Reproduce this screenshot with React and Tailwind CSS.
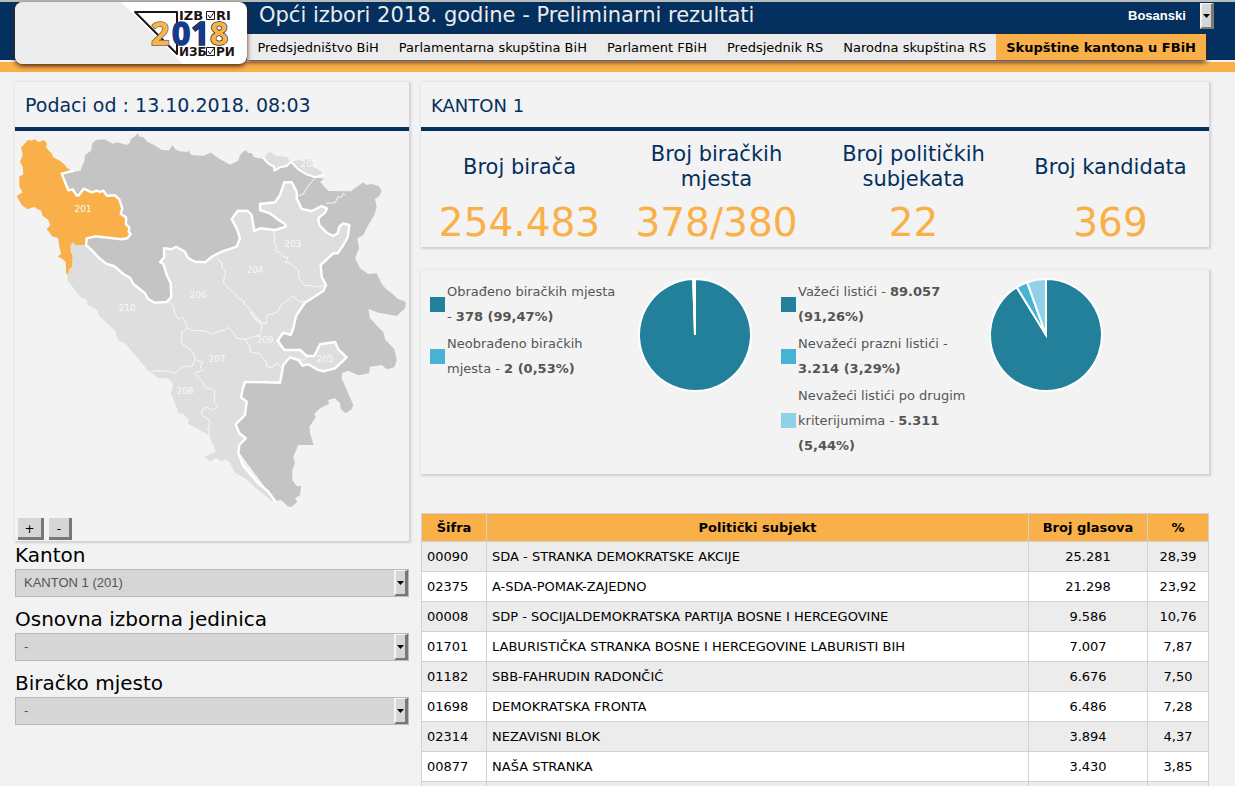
import { useState } from "react";

const NAV_ITEMS = [
  "Predsjedništvo BiH",
  "Parlamentarna skupština BiH",
  "Parlament FBiH",
  "Predsjednik RS",
  "Narodna skupština RS",
  "Skupštine kantona u FBiH",
];

const STATS = [
  { label: "Broj birača", value: "254.483" },
  { label: "Broj biračkih mjesta", value: "378/380" },
  { label: "Broj političkih subjekata", value: "22" },
  { label: "Broj kandidata", value: "369" },
];

const POLLING = [
  { label: "Obrađeno biračkih mjesta", text: "378 (99,47%)", share: 99.47, color: "#23809b" },
  { label: "Neobrađeno biračkih mjesta", text: "2 (0,53%)", share: 0.53, color: "#46b3d5" },
];

const BALLOTS = [
  { label: "Važeći listići", text: "89.057 (91,26%)", share: 91.26, color: "#23809b" },
  { label: "Nevažeći prazni listići", text: "3.214 (3,29%)", share: 3.29, color: "#46b3d5" },
  { label: "Nevažeći listići po drugim kriterijumima", text: "5.311 (5,44%)", share: 5.44, color: "#8fd2e7" },
];

const RESULTS = [
  ["00090", "SDA - STRANKA DEMOKRATSKE AKCIJE", "25.281", "28,39"],
  ["02375", "A-SDA-POMAK-ZAJEDNO", "21.298", "23,92"],
  ["00008", "SDP - SOCIJALDEMOKRATSKA PARTIJA BOSNE I HERCEGOVINE", "9.586", "10,76"],
  ["01701", "LABURISTIČKA STRANKA BOSNE I HERCEGOVINE LABURISTI BIH", "7.007", "7,87"],
  ["01182", "SBB-FAHRUDIN RADONČIĆ", "6.676", "7,50"],
  ["01698", "DEMOKRATSKA FRONTA", "6.486", "7,28"],
  ["02314", "NEZAVISNI BLOK", "3.894", "4,37"],
  ["00877", "NAŠA STRANKA", "3.430", "3,85"],
  ["", "", "", ""],
];

// Map geometry
const CANTON_201 =
  "M22.7 146L25 143L28 140L32 140.5L35 139L37 141.5L40 142L43 140L45 141L47 144L46 147L49 151L51.5 153L53 157L60 161L64 164L67 168L72.5 171L61.7 173.7L68.3 190.3L72.7 189.3L76.7 195.7L79 195L83.7 188.7L91.7 192.3L97 190.7L100 192L103.3 190.7L106.7 195.7L115 195.3L119.3 199.3L122.3 208.7L120.7 214L126 217.3L126 224.3L129.3 227.3L128.7 231.7L130.7 234L127.3 238.3L121.7 239.3L95 236.3L86.7 238.3L86 245L75.7 245L72.7 242L70.3 246L71 252L72.7 256L72 266.7L69.3 269.3L67.7 275L66 272.7L65.7 261.7L61 258L57.3 256.7L61 254.3L59 245L58.3 238.3L51.7 236L50 233L46.7 229.3L50.3 225.3L48.3 220L42.7 216L41 210.5L37 209L34.3 206.7L27.7 209.3L21.7 205L16.7 196L22.7 192.3L19.3 186.7L19.3 176.7L23.3 174.3L22.7 166.7L20 161.7L22.7 155L21 147.3Z";

const BORDER_201 =
  "M72.5 171L61.7 173.7L68.3 190.3L72.7 189.3L76.7 195.7L79 195L83.7 188.7L91.7 192.3L97 190.7L100 192L103.3 190.7L106.7 195.7L115 195.3L119.3 199.3L122.3 208.7L120.7 214L126 217.3L126 224.3L129.3 227.3L128.7 231.7L130.7 234L127.3 238.3L121.7 239.3L95 236.3L86.7 238.3L86 245";

const ENTITY_LINE =
  "L86 245L93.3 251.7L99.3 258.3L106.7 264L114 266L123.3 274L130 277.7L133.3 284L145 293.3L148.3 299.3L155 302.7L166.7 302L171.3 296.7L170.7 283.3L166.7 275L163.3 264L160 262L164.3 257.3L164 248.3L171.7 249.3L176 246.7L185 251.7L187.7 257.7L195 261.7L205 262.3L213 256L221.7 251.7L236.7 246.7L240 238.3L236.7 228.3L231.7 219.3L237.7 210.7L247.7 211L251.7 215L254.3 231L260 228.3L275 230L286 226.7L285 224.3L277.7 219.3L270 213.3L260 210L260 204L275 202.3L280 195L284.3 182.3L291.7 182.3L296.7 191.7L296.7 198.3L301.7 209L311.7 211L321.7 206L327 208.3L325 212.7L318.3 218.3L319.3 225L326.7 232.7L333.3 236L337.7 233.3L339.3 226.7L343.3 223.3L349.3 225L347.7 237.3L343.3 245L337.7 253.3L333.3 253.3L320.7 265L321.7 276.7L326 285L323.3 291L305 302.7L296 316L293.3 328.3L290.7 335L283.3 332.7L277.7 340.7L284.3 350L300 350L306.7 356L314.3 356L320 344.3L335 342L338.3 349.3L346.7 357.3L335 368.3L323.3 371.3L316.7 369.3L308.3 364.3L302.7 365.7L298.3 360L290 357.3L283.3 365L280 382.7L265 382.3L245 382L243 388L241 397.3L246.7 401.7L245 415L235.7 424.3L239.3 433.3L245.7 438.3L239.3 445L238.3 453.3L243.3 466L258.3 483.3L268.3 491.7L275 500.7";

const COUNTRY =
  "M61.7 173.7L80.7 170.7L81.7 166L84 162.7L85 155L91 150.7L92.3 143.3L96 140L105 139.3L112.7 143.7L117.3 142.3L126.7 145L130 142.7L130.7 139.3L134 137L138 133.3L139.3 136.7L143 137L147.3 141.7L154 145L161.7 150L169.3 150.3L172.3 145.3L175 149L179.3 151.3L187.3 152L189 150L190 154L193.3 155.3L203.3 155.7L211 152.7L218 158L230 164.7L238.3 160.7L240 155L243 152L245.7 150L248 153L251.7 153.3L254 157.3L264.3 159.3L274 166.7L280 167.3L291 161.7L298.3 169.3L315 177.3L324.3 178.7L320 181.7L328.3 191L350.7 191.3L363.3 182.3L366 185L371.7 184L378.3 186L381.7 190.7L380 195L375 199.3L376.7 207.3L374.3 215L368.3 225L363.3 235L357.3 238.3L359 248.3L355 258.3L360 268.3L368.3 274L376.7 273.3L381.7 284L386 289L391.7 293.3L398.3 299.3L404 301L406 303.3L405 308.3L396.7 316L386.7 314.3L378.3 312.7L368.3 309L370 318.3L380 329L383.3 331.7L385 339.3L394.3 349.3L396.7 360L394.3 367.3L386.7 369.3L381.7 365L370 366.7L369 373.3L358.3 375.3L348.3 370.7L342.3 372.7L341.7 378.3L346.7 390L353.3 405L351.7 409.3L345.7 413.3L341 409.3L340 403.3L335 398.3L328.3 400L329 404L320 408.3L314 414L315.7 417.3L309.3 426.7L310 433.3L313.7 445L298.3 445L293.3 456.7L295 463.3L292.3 470L292.3 480L296.7 486L301 486L300 495L295 498.3L297.3 501.7L291.7 506.7L288.3 506.7L281 500L275 500.7L200 400L80 250Z";

const FEDERATION =
  "M67.7 275L69.3 269.3L72 266.7L72.7 256L70.3 246L72.7 242L75.7 245" +
  ENTITY_LINE +
  "L271.7 501.3L266.7 496.7L256.7 489L245 478.3L235 472.7L230 463.3L225.7 459L221.7 461.7L216 457.7L210 461.7L205 456.7L216 451.7L211 440L209 435L188.3 424L188.3 419.3L183.3 414L178.3 412.7L176.7 407.3L170.7 393.3L173.3 385L171 381L166.7 378.3L158.3 378L148.3 370.7L135 355L125 343.3L118.3 340.7L115 330.7L99.3 316L97.3 310L87.3 305L86.7 299.3L81 297.7L75 290L67.3 280Z";

const POSAVINA =
  "M264.3 159.3L266.7 153.3L270 152L276.7 156L286.7 156.7L291 161.7L298 160L303 160L311 159L314 167L321.7 171.7L323.3 175L315 177.3L298.3 169.3L291 161.7L286.7 166L280 167.3L274.3 170.7L274 166.7Z";

const POSAVINA_BORDER =
  "M264.3 159.3L269 164L274 166.7L274.3 170.7L280 167.3L286.7 166L291 161.7L298.3 169.3L306 174L315 177.3L323.3 175";

const CANTON_LINES = [
  "M314 179L307.7 186.7L303.3 194L297.7 196",
  "M326.7 203.3L335 202.7L338.3 196.7L341.7 197L343.3 193.3L345 195",
  "M273.3 231L275 238L274 241L276 245L276 251L280 252.7L284 257L288.3 257.3L285 262.3L290 263L298.3 270L299 278.3L305 285.7L311 285.5L316.7 287.3L324.3 285",
  "M216.7 257.7L222 263L222 268L225.7 271.7L223.3 281.7L228 288L235 293.3L238 298L245 301.7L243 303L249 308L251 314L258 320L262.3 323.3L266.7 323.3L266.7 315L272 314L277.7 311.7L281 305L287 301L293.3 295.7L298 301L304.3 301.7",
  "M169.3 301.7L174 307L174 311.7L178.3 319.3L182 317L185 320.7L187.7 328.3L181.7 332L182 338L181 343.3L186 346L193 352L195 359.3L191.7 366.7L184 366L174 373.3L168.3 371L160 371L151.7 371",
  "M187.7 328.3L193.3 330.7L205 330.7L211.7 334.3L219 331L225 330L228.3 327.3L233 332L236.7 338.3L245 339.3L253 337L260 335L262.3 325L254 318L251.7 311L262.3 323.3",
  "M245 339.3L250 347L250 351.7L260 354L263 359L266.7 362.7L266 366L271.7 367.3L277.7 362.7L281 367.3",
  "M195 359.3L202.7 362.7L200 367L203 370L194 373.3L199 378L203 383L206 389L210 388L215 391.7L214 401.7L217.7 406.7L212.3 410L206.7 407.3L201.7 410L202.3 416L208 419L210 423.3L208 428L209 435",
  "M298.3 360L304 360L307 357",
];

const MAP_LABELS = [
  ["201", 83, 212],
  ["202", 309, 167],
  ["203", 293, 247],
  ["204", 255, 273],
  ["205", 325, 362],
  ["206", 198, 298],
  ["207", 217, 362],
  ["208", 185, 394],
  ["209", 265, 343],
  ["210", 127, 311],
];

function CantonMap({ zoom }) {
  return (
    <svg
      viewBox="15 131 394 387"
      className="block w-full"
      role="img"
      aria-label="Karta kantona"
    >
      <g
        transform={`translate(212 324) scale(${zoom}) translate(-212 -324)`}
        strokeLinejoin="round"
        strokeLinecap="round"
      >
        <path d={COUNTRY} fill="#c4c4c4" />
        <path d={FEDERATION} fill="#dedede" />
        <path d={POSAVINA} fill="#dedede" />
        <path d={CANTON_201} fill="#f9b04a" />
        {CANTON_LINES.map((d) => (
          <path key={d} d={d} fill="none" stroke="#f8f8f8" strokeWidth="1" />
        ))}
        <path
          d={BORDER_201 + ENTITY_LINE}
          fill="none"
          stroke="#fff"
          strokeWidth="2.4"
        />
        <path d={POSAVINA_BORDER} fill="none" stroke="#fff" strokeWidth="2" />
        {MAP_LABELS.map(([code, x, y]) => (
          <text
            key={code}
            x={x}
            y={y}
            textAnchor="middle"
            fill="#f8f8f8"
            className="text-[9px]"
          >
            {code}
          </text>
        ))}
      </g>
    </svg>
  );
}

function Logo() {
  return (
    <svg
      viewBox="0 0 232 62"
      className="block h-[62px] w-[232px] shrink-0 rounded-lg bg-white shadow-[0_2px_5px_#4a2010]"
      role="img"
      aria-label="Izbori 2018"
    >
      <path d="M0 0H106L168 62H0Z" fill="#ececec" />
      <path
        d="M162 10H120L162 52V10Z"
        fill="none"
        stroke="#1a1516"
        strokeWidth="2"
        strokeLinejoin="round"
      />
      <g fill="#1a1516" fontWeight="700">
        <text x="164" y="18" fontSize="13">IZB</text>
        <text x="201" y="18" fontSize="13">RI</text>
        <text x="164" y="54" fontSize="12">ИЗБ</text>
        <text x="201" y="54" fontSize="12">РИ</text>
      </g>
      <g fill="none" stroke="#1a1516" strokeWidth="1">
        <path d="M191.500 9.500H199.500V17.500H191.500Z" />
        <path d="M191.500 45.500H199.500V53.500H191.500Z" />
        <path d="M193 13L195 16L200 9" />
        <path d="M193 49L195 52L200 45" />
      </g>
      <g
        fontFamily="'Open Sans', 'Noto Sans', sans-serif"
        fontWeight="700"
        fontSize="32"
        strokeWidth="1.500"
        paintOrder="stroke"
      >
        <text x="136" y="43" fill="#f9b548" stroke="#6b6459">2</text>
        <text x="157" y="43" fill="#173a8c" stroke="#173a8c">0</text>
        <text x="176" y="43" fill="#173a8c" stroke="#14204a">1</text>
        <text x="195" y="43" fill="#f9b548" stroke="#2a2a3a">8</text>
      </g>
    </svg>
  );
}

// Raised grey drop-down arrow drawn over the right end of a select
function SelectArrow() {
  return (
    <span className="pointer-events-none absolute inset-y-px right-px flex w-[14px] items-center justify-center border-t border-r-[3px] border-b-2 border-l-2 border-t-[#f4f4f4] border-r-[#787878] border-b-[#787878] border-l-[#f4f4f4] bg-[#d6d6d6]">
      <svg viewBox="0 0 7 4" className="h-[4px] w-[7px] shrink-0">
        <path d="M0 0H7L3.500 4Z" fill="#000" />
      </svg>
    </span>
  );
}

function Header() {
  const [active, setActive] = useState(5);

  return (
    <header className="border-b-10 border-[#f9b048]">
      <div className="flex h-[62px] border-t-2 border-b-2 border-t-[#b9bdba] border-b-[#f2f2f2] bg-[#04305f] pl-[15px]">
        <div className="relative z-10">
          <Logo />
        </div>
        <div className="flex-1">
          <div className="flex h-8 items-start justify-between pr-5 pl-3">
            <h1 className="text-[21px] leading-[26px] text-[#ececec]">
              Opći izbori 2018. godine - Preliminarni rezultati
            </h1>
            <div className="relative">
              <select
                aria-label="Jezik"
                className="h-7 w-[95px] appearance-none bg-transparent pl-2 font-['Liberation_Sans',Arial,sans-serif] text-[13px] font-bold text-white"
              >
                <option>Bosanski</option>
              </select>
              <SelectArrow />
            </div>
          </div>
          <nav className="mr-[29px] flex h-[26px] justify-end bg-[#ececec] text-[13px] leading-6 whitespace-nowrap shadow-[0_2px_5px_#4a2010]">
            {NAV_ITEMS.map((item, i) => (
              <a
                key={item}
                href="#"
                onClick={() => setActive(i)}
                className={
                  i === active
                    ? "bg-[#f9b048] px-[10px] pt-[2px] font-bold"
                    : "px-[10px] pt-[2px]"
                }
              >
                {item}
              </a>
            ))}
          </nav>
        </div>
      </div>
    </header>
  );
}

function Panel({ children }) {
  return (
    <section className="bg-[#f3f3f3] shadow-[1px_1px_2px_1px_#d0d0d0]">
      {children}
    </section>
  );
}

function SelectField({ id, label, value }) {
  return (
    <div className="mb-2">
      <label htmlFor={id} className="block text-xl leading-7">
        {label}
      </label>
      <div className="relative">
        <select
          id={id}
          className="block h-7 w-full appearance-none border border-[#b9b9b9] bg-[#d6d6d6] px-2 font-['Liberation_Sans',Arial,sans-serif] text-[13px] text-[#555]"
        >
          <option>{value}</option>
        </select>
        <SelectArrow />
      </div>
    </div>
  );
}

function Pie({ data }) {
  const point = (share) => {
    const angle = (share / 100) * 2 * Math.PI;
    return `${57 + 56 * Math.sin(angle)} ${57 - 56 * Math.cos(angle)}`;
  };

  let start = 0;
  const slices = data.map((item) => {
    const from = start;
    start += item.share;
    const large = item.share > 50 ? 1 : 0;
    const d = `M57 57L${point(from)}A56 56 0 ${large} 1 ${point(start)}Z`;
    return { d, color: item.color };
  });

  return (
    <svg viewBox="0 0 114 114" className="h-[114px] w-[114px] shrink-0">
      {slices.map((s) => (
        <path key={s.d} d={s.d} fill={s.color} stroke="#fff" strokeWidth="2" />
      ))}
    </svg>
  );
}

function ChartBlock({ data }) {
  return (
    <div className="flex w-[351px] items-start">
      <ul className="w-[208px] space-y-[2px] pt-px">
        {data.map((item) => (
          <li key={item.label} className="flex items-center gap-[2px]">
            <span
              className="h-[15px] w-[15px] shrink-0"
              style={{ backgroundColor: item.color }}
            />
            <span className="w-[172px] text-[13px] leading-[25px] text-[#555]">
              {item.label} - <b>{item.text}</b>
            </span>
          </li>
        ))}
      </ul>
      <Pie data={data} />
    </div>
  );
}

function ResultsTable() {
  return (
    <table className="w-full table-fixed border-collapse text-[13px]">
      <thead>
        <tr className="h-7 bg-[#f9b048]">
          <th className="w-[65px] border border-[#d2d2d2]">Šifra</th>
          <th className="border border-[#d2d2d2]">Politički subjekt</th>
          <th className="w-[119px] border border-[#d2d2d2]">Broj glasova</th>
          <th className="w-[61px] border border-[#d2d2d2]">%</th>
        </tr>
      </thead>
      <tbody>
        {RESULTS.map(([code, name, votes, percent]) => (
          <tr key={code} className="h-[30px] odd:bg-[#ececec] even:bg-white">
            <td className="border border-[#d2d2d2] px-[5px]">{code}</td>
            <td className="border border-[#d2d2d2] px-[5px]">{name}</td>
            <td className="border border-[#d2d2d2] text-center">{votes}</td>
            <td className="border border-[#d2d2d2] text-center">{percent}</td>
          </tr>
        ))}
      </tbody>
    </table>
  );
}

export default function App() {
  const [zoom, setZoom] = useState(1);

  const zoomButton =
    "h-[22px] border-r-3 border-b-3 border-[#787878] bg-[#d6d6d6] pt-[2px] text-xs leading-4";

  return (
    <div className="min-h-screen bg-[#f2f2f2] font-['DejaVu_Sans',Verdana,sans-serif] text-black">
      <Header />

      <main className="flex items-start gap-3 pt-[10px] pr-[26px] pl-[15px]">
        {/* Map and filters */}
        <div className="w-[33%] shrink-0">
          <Panel>
            <h2 className="border-b-4 border-[#04305f] px-[10px] pt-[2px] text-[19px] leading-[43px] text-[#04305f]">
              Podaci od : 13.10.2018. 08:03
            </h2>
            <CantonMap zoom={zoom} />
            <div className="flex gap-[5px] px-[3px] pb-px">
              <button
                type="button"
                onClick={() => setZoom(zoom * 1.2)}
                className={`${zoomButton} w-[26px]`}
              >
                +
              </button>
              <button
                type="button"
                onClick={() => setZoom(Math.max(1, zoom / 1.2))}
                className={`${zoomButton} w-[23px]`}
              >
                -
              </button>
            </div>
          </Panel>

          <SelectField id="kanton" label="Kanton" value="KANTON 1 (201)" />
          <SelectField id="jedinica" label="Osnovna izborna jedinica" value="-" />
          <SelectField id="mjesto" label="Biračko mjesto" value="-" />
        </div>

        {/* Results */}
        <div className="min-w-0 flex-1">
          <Panel>
            <h2 className="border-b-4 border-[#04305f] px-[10px] pt-[2px] text-lg leading-[43px] text-[#04305f]">
              KANTON 1
            </h2>
            <dl className="grid grid-cols-4 pt-[11px] text-center">
              {STATS.map((s) => (
                <div key={s.label}>
                  <dt className="flex h-[50px] items-center justify-center px-4 text-[21px] leading-[25px] text-[#04305f]">
                    {s.label}
                  </dt>
                  <dd className="pt-[7px] text-[39px] leading-12 text-[#f9b048]">
                    {s.value}
                  </dd>
                </div>
              ))}
            </dl>
          </Panel>

          <div className="mt-[23px] mb-[39px]">
            <Panel>
              <div className="flex min-h-[204px] flex-wrap pt-2 pl-[9px]">
                <ChartBlock data={POLLING} />
                <ChartBlock data={BALLOTS} />
              </div>
            </Panel>
          </div>

          <ResultsTable />
        </div>
      </main>
    </div>
  );
}
